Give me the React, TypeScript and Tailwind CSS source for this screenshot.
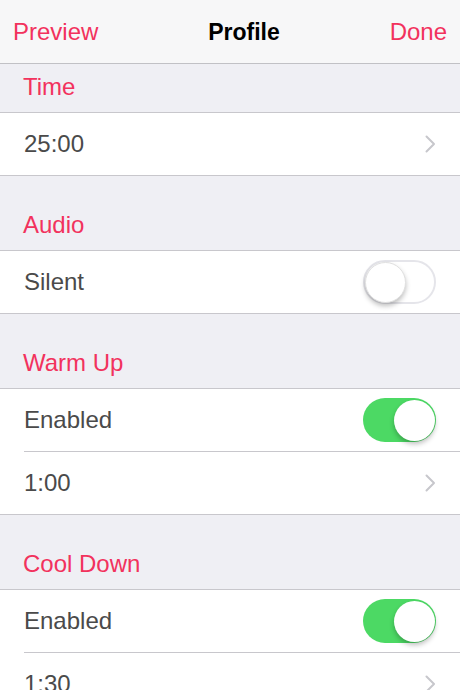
import React from 'react';

const pink = 'text-[#f2325d]';

const Chevron: React.FC = () => (
    <svg width="11" height="18" viewBox="0 0 11 18" fill="none">
        <path d="M1.5 1.5L9 9L1.5 16.5" stroke="#c7c7cc" strokeWidth="2" strokeLinecap="round" strokeLinejoin="round" />
    </svg>
);

const Toggle: React.FC<{ on: boolean }> = ({ on }) => (
    <div
        className={`w-[73px] h-[44px] rounded-full flex items-center p-[1.5px] ${
            on ? 'bg-[#4cd964] justify-end' : 'bg-white border-[2px] border-[#e5e5ea] justify-start'
        }`}
    >
        <div
            className={`rounded-full bg-white shadow-[0_3px_5px_rgba(0,0,0,0.25)] ${
                on ? 'w-[41px] h-[41px]' : 'w-[41px] h-[41px] -ml-[2px] border border-[#e0e0e0]'
            }`}
        />
    </div>
);

const Header: React.FC<{ title: string; first?: boolean }> = ({ title, first }) => (
    <div className={`${first ? 'h-[49px]' : 'h-[75px]'} bg-[#efeff4] border-b border-[#c8c7cc] flex items-end px-[23px] pb-[13px]`}>
        <span className={`text-[24px] leading-[24px] ${pink}`}>{title}</span>
    </div>
);

const Row: React.FC<{ label: string; chevron?: boolean; toggle?: boolean; inset?: boolean }> = ({ label, chevron, toggle, inset }) => (
    <div className="bg-white">
        <div
            className={`h-[63px] flex items-center justify-between border-b border-[#c8c7cc] ${
                inset ? 'ml-[24px] pr-[24px]' : 'px-[24px]'
            }`}
        >
            <span className="text-[24px] leading-[24px] text-[#4a4a4a]">{label}</span>
            {chevron && <Chevron />}
            {toggle !== undefined && <Toggle on={toggle} />}
        </div>
    </div>
);

const App: React.FC = () => {
    return (
        <div className="w-[460px] h-[690px] overflow-hidden bg-[#efeff4]" style={{ fontFamily: '"Liberation Sans", Arial, sans-serif' }}>
            {/* Navigation bar */}
            <div className="h-[64px] bg-[#f7f7f8] border-b border-[#c1c1c5] flex items-center justify-between px-[13px]">
                <span className={`text-[24px] leading-[24px] ${pink} pt-[1px]`}>Preview</span>
                <span className="text-[23px] leading-[24px] font-bold text-black">Profile</span>
                <span className={`text-[24px] leading-[24px] ${pink} pt-[1px]`}>Done</span>
            </div>

            <Header title="Time" first />
            <Row label="25:00" chevron />

            <Header title="Audio" />
            <Row label="Silent" toggle={false} />

            <Header title="Warm Up" />
            <Row label="Enabled" toggle inset />
            <Row label="1:00" chevron />

            <Header title="Cool Down" />
            <Row label="Enabled" toggle inset />
            <Row label="1:30" chevron />
        </div>
    );
};

export default App;
